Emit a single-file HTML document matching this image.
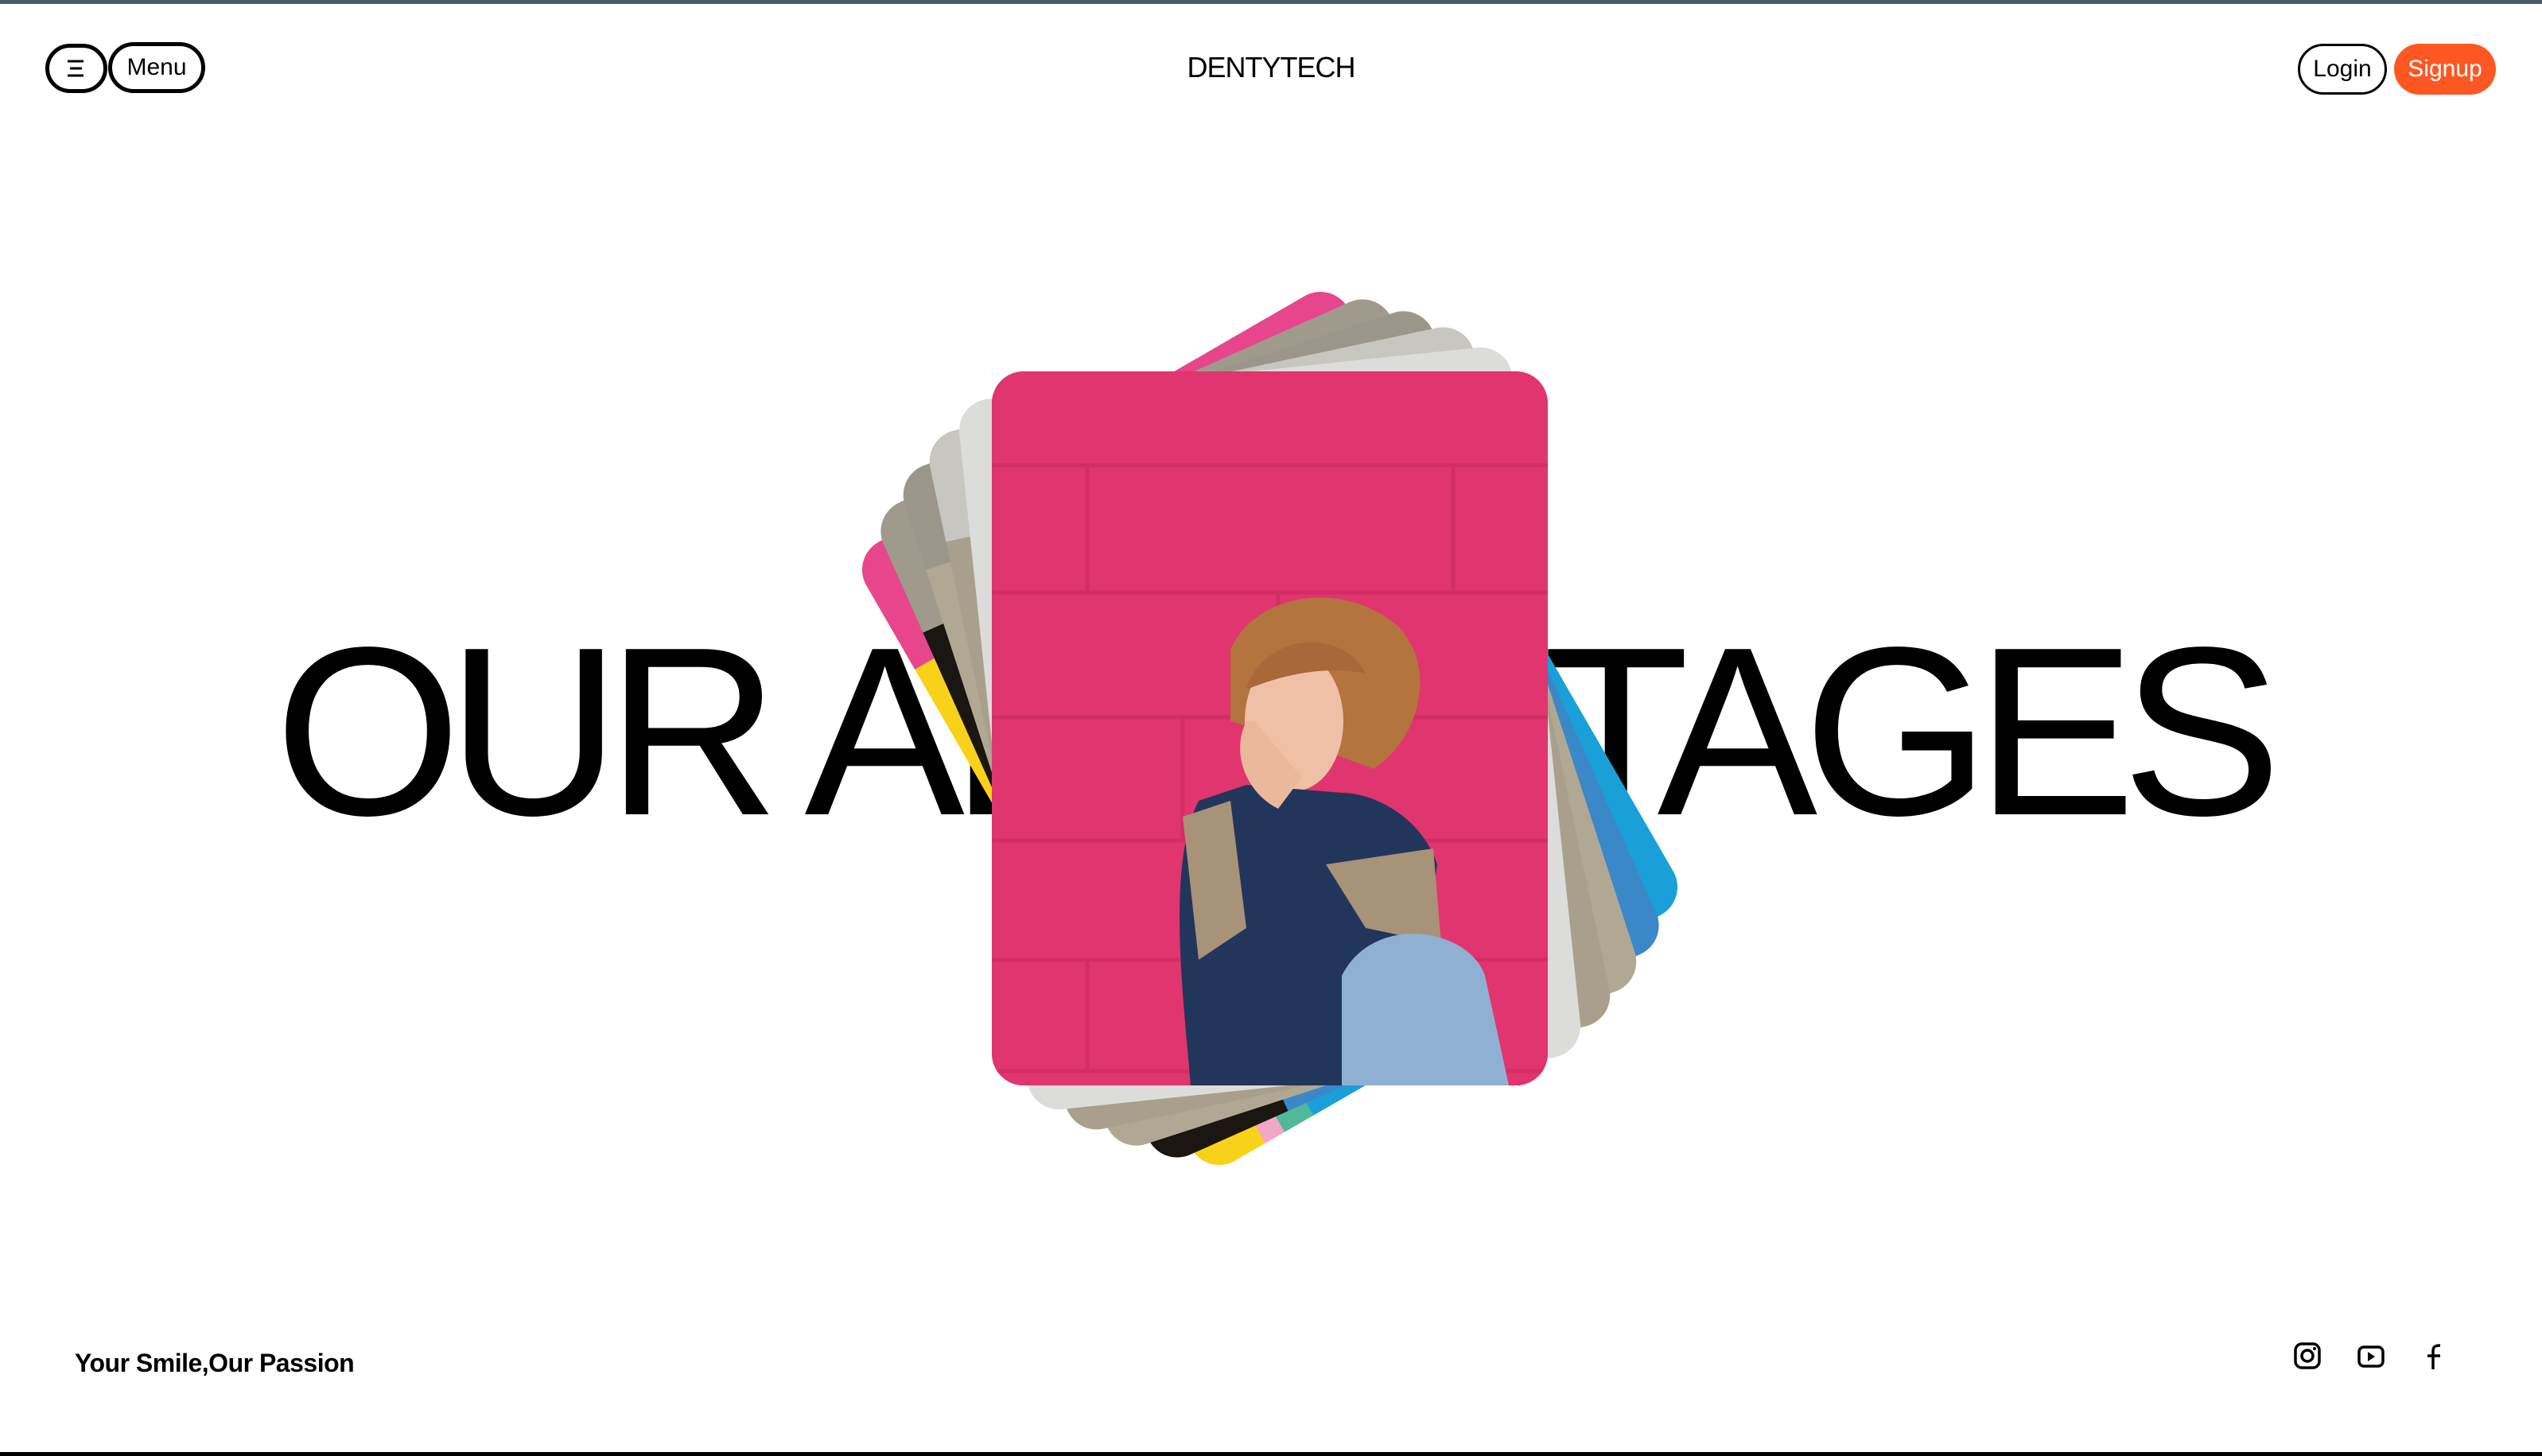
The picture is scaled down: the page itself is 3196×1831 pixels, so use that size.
<!DOCTYPE html>
<html><head><meta charset="utf-8"><style>
*{margin:0;padding:0;box-sizing:border-box}
body{width:3196px;height:1831px;background:#fff;position:relative;overflow:hidden;font-family:"Liberation Sans",sans-serif;color:#000}
.topbar{position:absolute;left:0;top:0;width:3196px;height:5px;background:#4b5b66}
.botbar{position:absolute;left:0;bottom:0;width:3196px;height:5px;background:#000}
.pill{position:absolute;border:5px solid #000;border-radius:40px;display:flex;align-items:center;justify-content:center;font-size:30px;background:#fff}
.big{position:absolute;left:0;width:3196px;top:740px;text-align:center;font-size:302px;letter-spacing:-18px;line-height:360px;color:#000}
.card{position:absolute;left:1247px;top:467px;width:699px;height:898px;border-radius:40px;overflow:hidden;transform-origin:50% 50%}
.tag{position:absolute;left:94px;top:1696px;font-size:32px;font-weight:bold;letter-spacing:-0.5px}
</style></head><body>
<div class="topbar"></div>
<div class="pill" style="left:57px;top:55px;width:78px;height:62px">
<svg width="26" height="22" viewBox="0 0 26 22"><path d="M2 2H22M5 11H20M2 20H22" stroke="#000" stroke-width="3"/></svg></div>
<div class="pill" style="left:136px;top:53px;width:122px;height:64px">Menu</div>
<div style="position:absolute;left:0;width:3196px;top:64px;text-align:center;font-size:36px;letter-spacing:-1px">DENTYTECH</div>
<div class="pill" style="left:2889px;top:55px;width:112px;height:64px;border-width:3px">Login</div>
<div class="pill" style="left:3010px;top:55px;width:128px;height:64px;border:none;background:#ff5722;color:#fff">Signup</div>

<div class="big">OUR ADVANTAGES</div>

<div class="card" style="transform:rotate(-30deg);background:linear-gradient(180deg,#e8468c 0 18%,transparent 18%),linear-gradient(90deg,#f8d21a 0 12%,#f2a6c8 12% 16%,#52b89a 16% 22%,#1aa0d8 22% 100%)"></div>
<div class="card" style="transform:rotate(-24deg);background:linear-gradient(180deg,#a09a8c 0 18%,transparent 18%),linear-gradient(90deg,#1a1612 0 25%,#3a88c8 25% 100%)"></div>
<div class="card" style="transform:rotate(-18deg);background:linear-gradient(180deg,#9a968a 0 14%,#b1a894 14% 100%)"></div>
<div class="card" style="transform:rotate(-12deg);background:linear-gradient(180deg,#c8c6c0 0 15%,#a8a08c 15% 100%)"></div>
<div class="card" style="transform:rotate(-6deg);background:#dcdcda"></div>
<div class="card" style="background:#e03a74">
<svg width="699" height="898" viewBox="0 0 699 898">
<rect width="699" height="898" fill="#e1356f"/>
<g stroke="#c92a60" stroke-width="5" opacity=".6"><path d="M0 118H699M0 278H699M0 435H699M0 590H699M0 740H699M0 880H699M120 118V278M360 278V435M580 118V278M240 435V590M480 590V740M120 740V880"/></g>
<path d="M300 350 C330 280 440 260 510 320 C560 370 540 460 480 500 L400 470 L300 440 Z" fill="#b4743e"/>
<ellipse cx="380" cy="440" rx="62" ry="88" fill="#f0c0a6"/>
<path d="M320 400 C340 330 440 320 470 380 C420 370 370 380 320 400Z" fill="#a8683a"/>
<path d="M260 540 C220 620 240 780 250 898 L500 898 L540 760 L560 620 C540 560 480 530 440 530 L320 520 Z" fill="#22365c"/>
<path d="M240 560 L300 540 L320 700 L260 740 Z" fill="#a89278"/>
<path d="M420 620 L555 600 L565 720 L470 700Z" fill="#a89278"/>
<path d="M440 760 C480 680 600 700 620 760 L650 898 L440 898 Z" fill="#8fb0d2"/>
<path d="M320 440 C300 480 320 530 360 550 L390 510 C370 490 350 460 330 440Z" fill="#ecb89c"/>
</svg></div>

<div class="tag">Your Smile,Our Passion</div>
<svg style="position:absolute;left:2884px;top:1688px" width="34" height="34" viewBox="0 0 34 34"><rect x="2" y="2" width="30" height="30" rx="8" fill="none" stroke="#000" stroke-width="3.5"/><circle cx="17" cy="17" r="7" fill="none" stroke="#000" stroke-width="3.5"/><circle cx="26" cy="8" r="2" fill="#000"/></svg>
<svg style="position:absolute;left:2964px;top:1692px" width="34" height="28" viewBox="0 0 34 28"><rect x="2" y="2" width="30" height="24" rx="6" fill="none" stroke="#000" stroke-width="3.5"/><path d="M13 8L22 14L13 20Z" fill="#000"/></svg>
<svg style="position:absolute;left:3050px;top:1690px" width="20" height="32" viewBox="0 0 20 32"><path d="M9 32V9C9 4 11 2 18 2M2 15H18" fill="none" stroke="#000" stroke-width="3.5"/></svg>
<div class="botbar"></div>
</body></html>
